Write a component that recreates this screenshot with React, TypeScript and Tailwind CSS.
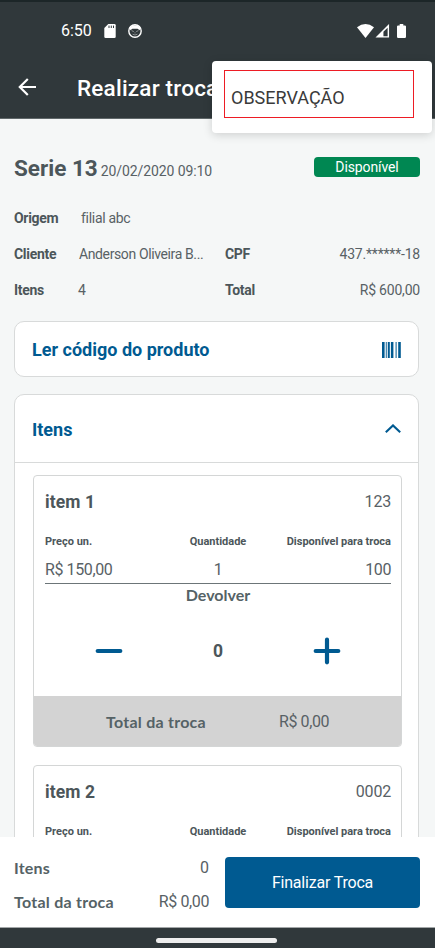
type Item = {
  name: string;
  code: string;
  exchange?: {
    price: string;
    quantity: number;
    available: number;
    toReturn: number;
    total: string;
  };
};

const items: Item[] = [
  {
    name: "item 1",
    code: "123",
    exchange: { price: "R$ 150,00", quantity: 1, available: 100, toReturn: 0, total: "R$ 0,00" },
  },
  { name: "item 2", code: "0002" },
];

function StatusBar() {
  return (
    <div className="flex h-[56px] items-center border-t-2 border-[#1c2628] pt-[3px] pl-[61px] pr-[29px] text-white">
      <span className="text-[16px] leading-none">6:50</span>
      {/* SD card */}
      <svg className="ml-[12px] h-[14px] w-[12px]" viewBox="0 0 12 14" fill="none">
        <path d="M4.3 0H10.4Q11.7 0 11.7 1.3V12.7Q11.7 14 10.4 14H1.6Q.3 14 .3 12.7V4Z" fill="white" />
        <path d="M5 1.6V4M7.3 1.6V4M9.5 1.6V4" stroke="#30383b" strokeWidth="1" />
      </svg>
      <svg className="ml-[12px] h-[14px] w-[14px]" viewBox="0 0 14 14" fill="none">
        <circle cx="7" cy="7" r="6.2" stroke="white" strokeWidth="1.4" />
        <path d="M1.4 3.6Q7-1 12.6 3.6L11.6 6.2 9.6 4.8H4.4L2.4 6.2Z" fill="white" />
        <path d="M3.6 6.6 5.8 7.6M10.4 6.6 8.2 7.6M4.6 10.2Q7 11.8 9.4 10.2M7 8.4V9.4" stroke="white" strokeOpacity=".5" strokeWidth=".9" />
      </svg>
      <div className="ml-auto flex items-center">
        <svg className="h-[14px] w-[17px]" viewBox="0 0 17 14">
          <path d="M8.5 14 0 3.2Q8.5-3.2 17 3.2Z" fill="white" />
        </svg>
        <svg className="ml-[1px] h-[14px] w-[15px]" viewBox="0 0 15 15" fill="none">
          <path d="M14.5 0V14.5H0Z" fill="white" />
          <path d="M13 4V13.2H8.5V8.4Z" fill="#30383b" />
        </svg>
        <svg className="ml-[7px] h-[14px] w-[9px]" viewBox="0 0 9 14" fill="white">
          <path d="M2.7 0H6.3V1.4H7.8Q9 1.4 9 2.6V12.8Q9 14 7.8 14H1.2Q0 14 0 12.8V2.6Q0 1.4 1.2 1.4H2.7Z" />
        </svg>
      </div>
    </div>
  );
}

function ItemCard({ item }: { item: Item }) {
  const { name, code, exchange } = item;

  return (
    <article className="h-[272px] shrink-0 overflow-hidden rounded-[4px] border border-[#d4d6d6] bg-white">
      <div className="flex h-[220px] flex-col pr-[10px] pl-[11px]">
        <div className="mt-[13px] flex h-[26px] items-center justify-between">
          <h3 className="text-[17.5px] font-bold tracking-[0.1px]">{name}</h3>
          <span className="text-[16px] tracking-[-0.2px] text-[#586165]">{code}</span>
        </div>
        <div className="mt-[18px] grid h-[18px] grid-cols-3 items-center text-[11px] font-bold">
          <span>Preço un.</span>
          <span className="text-center">Quantidade</span>
          <span className="text-right whitespace-nowrap">Disponível para troca</span>
        </div>
        {exchange && (
          <>
            <div className="mt-[6px] grid h-[27px] grid-cols-3 items-center border-b border-[#6c7578] text-[16px] tracking-[-0.4px] text-[#586165]">
              <span>{exchange.price}</span>
              <span className="text-center">{exchange.quantity}</span>
              <span className="text-right">{exchange.available}</span>
            </div>
            <p className="mt-[1px] h-[20px] text-center font-[Lato] text-[16px] leading-[20px] font-bold text-[#556266]">
              Devolver
            </p>
            <div className="mt-[32px] flex h-[28px] items-center justify-between px-[50px]">
              <button aria-label="Diminuir">
                <svg className="h-[28px] w-[28px]" viewBox="0 0 28 28" stroke="#005a91" strokeWidth="4.2" strokeLinecap="round">
                  <path d="M2.7 14H25.3" />
                </svg>
              </button>
              <span className="text-[17.5px] font-bold">{exchange.toReturn}</span>
              <button aria-label="Aumentar">
                <svg className="h-[28px] w-[28px]" viewBox="0 0 28 28" stroke="#005a91" strokeWidth="4.2" strokeLinecap="round">
                  <path d="M2.7 14H25.3M14 2.7V25.3" />
                </svg>
              </button>
            </div>
          </>
        )}
      </div>
      {exchange && (
        <div className="flex h-[51px] items-center bg-[#d3d3d3] pl-[72px]">
          <span className="w-[173px] font-[Lato] text-[16px] font-bold tracking-[0.25px] text-[#556266]">Total da troca</span>
          <span className="text-[16px] tracking-[-0.4px] text-[#586165]">{exchange.total}</span>
        </div>
      )}
    </article>
  );
}

export default function App() {
  return (
    <div className="relative flex h-[948px] w-[435px] flex-col overflow-hidden bg-white font-[Roboto,sans-serif] text-[#4c565a]">
      <header className="h-[119px] shrink-0 border-b border-[#60686a] bg-[#30383b]">
        <StatusBar />
        <div className="flex h-[62px] items-center pl-[18px] text-white">
          <svg className="h-[18px] w-[18px]" viewBox="0 0 18 18" fill="none" stroke="white" strokeWidth="2.2">
            <path d="M18 9H2M9.8 1 1.8 9 9.8 17" />
          </svg>
          <h1 className="mt-[3px] ml-[41px] text-[22.5px] font-medium tracking-[0.2px]">Realizar troca</h1>
        </div>
      </header>

      {/* Options menu */}
      <div className="absolute top-[61px] left-[212px] h-[72px] w-[220px] rounded-[4px] bg-white pt-[9px] pl-[12px] shadow-[0_2px_10px_rgba(0,0,0,0.16)]">
        <div className="flex h-[48px] w-[190px] items-center border border-[#ed1c24] pt-[7px] pl-[6px] text-[18px] text-[#3a3a3a]">
          OBSERVAÇÃO
        </div>
      </div>

      <main className="flex h-[718px] shrink-0 flex-col overflow-hidden bg-[#f5f7f7] pr-[15px] pl-[14px]">
        <div className="mt-[32px] flex h-[32px] shrink-0 items-center justify-between">
          <div className="mt-[3px] flex items-baseline">
            <h2 className="text-[22.5px] font-bold">Serie 13</h2>
            <span className="ml-[3px] text-[14px] tracking-[-0.1px] text-[#586165]">20/02/2020 09:10</span>
          </div>
          <span className="mb-[1px] h-[20px] w-[106px] rounded-[4px] bg-[#008752] text-center text-[14px] leading-[21px] tracking-[-0.1px] text-white">
            Disponível
          </span>
        </div>

        <dl className="mt-[17px] shrink-0 text-[14px] tracking-[-0.3px]">
          <div className="flex h-[36px] items-center">
            <dt className="w-[67px] font-bold">Origem</dt>
            <dd className="text-[#586165]">filial abc</dd>
          </div>
          <div className="flex h-[36px] items-center">
            <dt className="w-[65px] font-bold">Cliente</dt>
            <dd className="w-[146px] tracking-[-0.38px] text-[#586165]">Anderson Oliveira B...</dd>
            <dt className="font-bold">CPF</dt>
            <dd className="ml-auto tracking-[-0.2px] text-[#586165]">437.******-18</dd>
          </div>
          <div className="flex h-[36px] items-center">
            <dt className="w-[64px] font-bold">Itens</dt>
            <dd className="w-[147px] text-[#586165]">4</dd>
            <dt className="font-bold">Total</dt>
            <dd className="ml-auto tracking-[-0.2px] text-[#586165]">R$ 600,00</dd>
          </div>
        </dl>

        <button className="mt-[13px] mr-px flex h-[56px] shrink-0 items-center justify-between rounded-[10px] border border-[#d8dada] bg-white pr-[17px] pl-[17px] text-[#005a91]">
          <span className="text-[18px] font-bold">Ler código do produto</span>
          <svg className="mt-[2px] h-[16px] w-[19px]" viewBox="0 0 19 16" fill="#005a91">
            <path d="M0 0h2.6v16H0zM3.8 0h.9v16h-.9zM5.8 0h2v16h-2zM8.9 0h2.5v16H8.9zM13.6 0h1v16h-1zM16.2 0h2.6v16h-2.6z" />
          </svg>
        </button>

        <section className="mt-[17px] mr-px shrink-0 rounded-t-[10px] border border-[#d8dada] bg-white">
          <div className="flex h-[68px] items-center justify-between border-b border-[#d8dada] pr-[17px] pl-[17px] text-[#005a91]">
            <h2 className="mt-[2px] text-[18px] font-bold">Itens</h2>
            <svg className="h-[9px] w-[16px]" viewBox="0 0 16 9" fill="none" stroke="currentColor" strokeWidth="2.1">
              <path d="M.8 8.2 8 1.4 15.2 8.2" />
            </svg>
          </div>
          <div className="flex flex-col gap-[18px] pt-[12px] pr-[16px] pl-[18px]">
            {items.map((item) => (
              <ItemCard key={item.name} item={item} />
            ))}
          </div>
        </section>
      </main>

      <footer className="flex h-[90px] shrink-0 items-center justify-between bg-white pr-[15px] pl-[14px]">
        <div className="mt-[5px] w-[195px] text-[16px]">
          <div className="flex h-[34px] items-center justify-between">
            <span className="font-[Lato] font-bold tracking-[0.2px] text-[#556266]">Itens</span>
            <span className="text-[#586165]">0</span>
          </div>
          <div className="flex h-[34px] items-center justify-between">
            <span className="font-[Lato] font-bold tracking-[0.25px] text-[#556266]">Total da troca</span>
            <span className="tracking-[-0.4px] text-[#586165]">R$ 0,00</span>
          </div>
        </div>
        <button className="h-[51px] w-[195px] rounded-[4px] bg-[#005a91] pt-[2px] text-[16px] tracking-[-0.2px] text-white">
          Finalizar Troca
        </button>
      </footer>

      <div className="flex h-[21px] shrink-0 justify-center border-t border-[#a3a7a8] bg-[#30383b] pt-[10px] pr-[2px]">
        <div className="h-[5px] w-[121px] rounded-full bg-[#ededed]" />
      </div>
    </div>
  );
}
